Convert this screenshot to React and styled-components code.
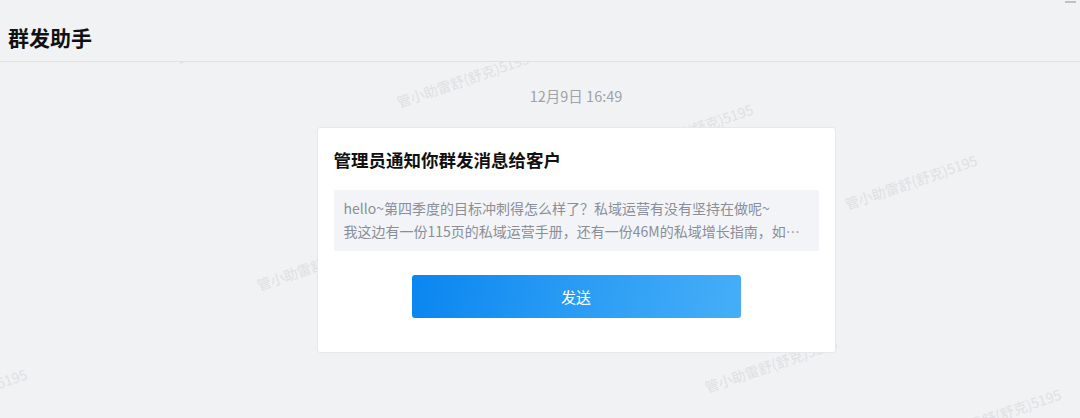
import styled, { createGlobalStyle } from "styled-components"

const GlobalStyle = createGlobalStyle`
  html, body {
    margin: 0;
    padding: 0;
    background: #f1f2f4;
    font-family: "Noto Sans CJK SC", "Noto Sans", sans-serif;
  }
`

const Page = styled.div`
  position: relative;
  width: 1080px;
  height: 418px;
  overflow: hidden;
  background: #f1f2f4;
`

const MarkLayer = styled.div`
  position: absolute;
  inset: 0;
  z-index: 0;
  pointer-events: none;
`

const Mark = styled.span`
  position: absolute;
  left: ${p => p.$x}px;
  top: ${p => p.$y - 16}px;
  font-size: 14px;
  line-height: 16px;
  white-space: nowrap;
  color: #dfe0e3;
  transform: rotate(-19deg);
  transform-origin: left bottom;
`

const Header = styled.header`
  position: relative;
  z-index: 1;
  box-sizing: border-box;
  height: 62px;
  padding: 23px 0 0 8px;
  background: #f1f2f4;
  border-bottom: 1px solid #e1e2e5;
`

const Title = styled.h1`
  margin: 0;
  font-size: 21px;
  line-height: 28px;
  font-weight: 700;
  color: #111;
`

const MinButton = styled.span`
  position: absolute;
  top: 1px;
  right: 4px;
  width: 11px;
  height: 2px;
  background: #bfc0c8;
`

const Main = styled.main`
  position: relative;
  z-index: 1;
  display: flex;
  flex-direction: column;
  align-items: center;
  padding: 24px 0 0 72px;
`

const Time = styled.div`
  font-size: 14.5px;
  line-height: 20px;
  color: #9ea3ab;
`

const Card = styled.section`
  box-sizing: border-box;
  width: 519px;
  margin-top: 21px;
  padding: 20px 16px 34px;
  background: #fff;
  border: 1px solid #e7e8eb;
  border-radius: 3px;
  display: flex;
  flex-direction: column;
  align-items: center;
`

const CardTitle = styled.h2`
  align-self: stretch;
  margin: 0;
  font-size: 17.5px;
  line-height: 24px;
  font-weight: 700;
  color: #111;
`

const Message = styled.div`
  align-self: stretch;
  margin-top: 18px;
  padding: 7px 10px 8px;
  background: #f2f4f7;
`

const MessageText = styled.div`
  color: #8a8e96;
  font-size: 14px;
  line-height: 23px;
  white-space: pre-line;
  display: -webkit-box;
  -webkit-line-clamp: 2;
  -webkit-box-orient: vertical;
  overflow: hidden;
`

const SendButton = styled.button`
  width: 329px;
  height: 43px;
  margin-top: 24px;
  border: 0;
  border-radius: 3px;
  background: linear-gradient(100deg, #0a86f0 0%, #2a9cf4 50%, #46aef8 100%);
  color: #fff;
  font-family: inherit;
  font-size: 15px;
  cursor: pointer;
`

const marks = [
  [178, 66], [400, 110], [624, 161], [848, 212],
  [260, 293], [484, 344], [708, 395], [932, 446], [-102, 426],
]

const text = "hello~第四季度的目标冲刺得怎么样了？私域运营有没有坚持在做呢~\n我这边有一份115页的私域运营手册，还有一份46M的私域增长指南，如果你需要的话可以回复我领取哦~"

export default function App() {
  return (
    <Page>
      <GlobalStyle />
      <MarkLayer>
        {marks.map(([x, y], i) => (
          <Mark key={i} $x={x} $y={y}>管小助雷舒(舒克)5195</Mark>
        ))}
      </MarkLayer>
      <Header>
        <Title>群发助手</Title>
        <MinButton />
      </Header>
      <Main>
        <Time>12月9日 16:49</Time>
        <Card>
          <CardTitle>管理员通知你群发消息给客户</CardTitle>
          <Message>
            <MessageText>{text}</MessageText>
          </Message>
          <SendButton>发送</SendButton>
        </Card>
      </Main>
    </Page>
  )
}
